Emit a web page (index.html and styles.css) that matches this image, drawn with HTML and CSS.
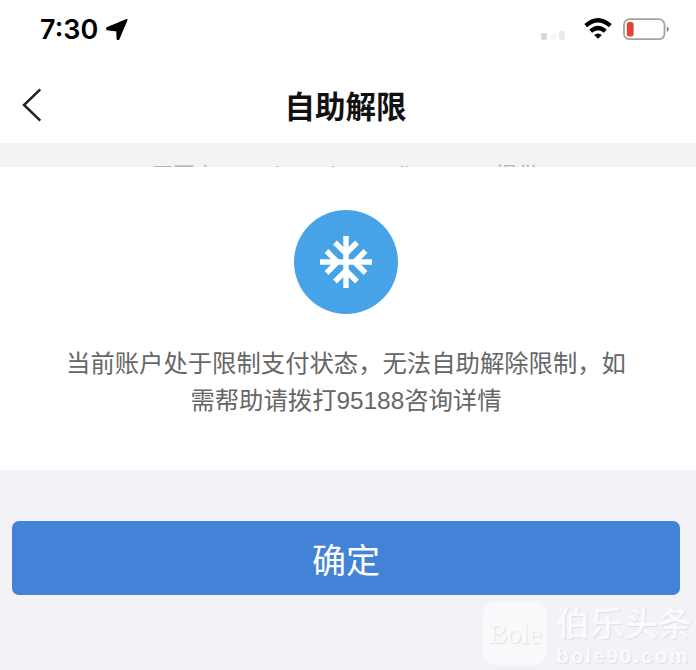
FILE: index.html
```html
<!DOCTYPE html>
<html lang="zh-CN">
<head>
<meta charset="utf-8">
<title>自助解限</title>
<link rel="stylesheet" href="styles.css">
</head>
<body>
<main class="screen">
  <header class="status">
    <span class="time">7:30</span>
    <svg class="location" width="22" height="22" viewBox="0 0 22 22"><path d="M20.8.8 12.6 20.3H11.4L11 11.8 1 10.4V9Z" fill="#000" stroke="#000" stroke-width="1.6" stroke-linejoin="round"/></svg>
    <span class="signal"><i></i><i></i><i></i></span>
    <svg class="wifi" width="28" height="22" viewBox="0 0 28 22" fill="none" stroke="#000" stroke-width="4.2"><path d="M1.7 7.6Q14-3.2 26.3 7.6"/><path d="M6.7 13.2Q14 6.8 21.3 13.2"/><path d="M10.2 17Q14 13.8 17.8 17L14 20.8Z" fill="#000" stroke="none"/></svg>
    <svg class="battery" width="47" height="23" viewBox="0 0 47 23"><rect x="1" y="1.2" width="40.5" height="20" rx="5.5" fill="#fff" stroke="#a3a3a3" stroke-width="1.8"/><rect x="3.8" y="4" width="6.8" height="14.4" rx="2.5" fill="#e04438"/><path d="M43.8 8.2Q48 11.2 43.8 14.2Z" fill="#888"/></svg>
  </header>
  <nav class="nav">
    <svg class="back" width="20" height="34" viewBox="0 0 20 34"><path d="M18.3 1.3 2 17 18.3 32.7" fill="none" stroke="#222" stroke-width="2.5"/></svg>
    <h1 class="title">自助解限</h1>
  </nav>
  <div class="provider"><p>网页由 <span class="host">securityassistant.alipay.com</span> 提供</p></div>
  <section class="notice">
    <svg class="frozen" width="104" height="104" viewBox="-52 -52 104 104">
      <circle r="52" fill="#46a3e7"/>
      <g fill="none" stroke="#fff" stroke-width="5.4">
        <path d="M0-26V26M-26 0H26"/>
        <path d="M-11-19.5 0-8.5 11-19.5M-11 19.5 0 8.5 11 19.5M-19.5-11-8.5 0-19.5 11M19.5-11 8.5 0 19.5 11"/>
      </g>
      <path d="M-5 0 0-5 5 0 0 5Z" fill="#fff"/>
    </svg>
    <p class="message">当前账户处于限制支付状态，无法自助解除限制，如<br>需帮助请拨打<span class="phone">95188</span>咨询详情</p>
  </section>
  <div class="actions"><button class="confirm">确定</button></div>
  <aside class="brand">
    <span class="brand-logo">Bole</span>
    <span class="brand-words"><span class="brand-name">伯乐头条</span><span class="brand-url">bole90.com</span></span>
  </aside>
</main>
</body>
</html>
```
FILE: styles.css
```css
* { box-sizing: border-box; }
body { margin: 0; font-family: "Liberation Sans", "Noto Sans CJK SC", sans-serif; }
.screen { position: relative; width: 696px; height: 670px; overflow: hidden; background: #f2f2f7; }
.status { display: flex; align-items: center; height: 60px; padding: 0 26px 0 40px; background: #fff; }
.time { width: 58px; font: 600 27px/60px Inter, sans-serif; white-space: nowrap; }
.location { margin-left: 8px; }
.signal { display: flex; align-items: flex-end; gap: 3px; height: 10px; margin: 9px 0 0 auto; }
.signal i { width: 6px; height: 7px; border-radius: 2px; background: #d9d9d9; }
.signal i:nth-child(2) { background: #f8f8f8; }
.signal i:nth-child(3) { height: 9px; background: #ebebeb; }
.wifi { margin: -2px 0 0 19px; }
.battery { margin: -2px 0 0 11px; }
.nav { display: grid; grid-template-columns: 42px 1fr 47px; align-items: center; height: 83px; background: #fff; }
.back { margin: 7px 0 0 22px; }
.title { margin: 6px 0 0; text-align: center; font: 700 30.5px/44px "Noto Sans CJK SC", sans-serif; color: #111; }
.provider { height: 24px; padding-right: 6px; overflow: hidden; background: #f3f3f3; text-align: center; font-size: 21.6px; line-height: 30px; white-space: nowrap; color: #b4b4b4; }
.provider p { margin: 0; padding-top: 18px; }
.host { line-height: 1; vertical-align: 1px; }
.notice { display: flex; flex-direction: column; align-items: center; height: 303px; padding: 43px 4px 0 0; background: #fff; }
.message { margin: 31px 0 0; text-align: center; font-size: 24.35px; line-height: 37px; color: #666; white-space: nowrap; }
.actions { padding: 51px 16px 0 12px; }
.confirm { display: block; width: 100%; height: 74px; padding: 2px 0 0; border: 0; border-radius: 7px; background: #4282d7; color: #fff; font: 400 34px/72px "Noto Sans CJK SC", sans-serif; }
.brand { position: absolute; left: 483px; top: 601px; display: flex; gap: 9px; color: #fafafc; text-shadow: 1px 1px 1px #dedee3; }
.brand-logo { width: 64px; height: 64px; border-radius: 13px; background: #f9f9fb; text-align: center; font: 28px/66px "Liberation Serif", serif; }
.brand-words { display: flex; flex-direction: column; }
.brand-name { font: 500 34px/42px "Noto Sans CJK SC", sans-serif; white-space: nowrap; }
.brand-url { font: 700 21px/26px "Liberation Sans", sans-serif; letter-spacing: 1.8px; }
```
